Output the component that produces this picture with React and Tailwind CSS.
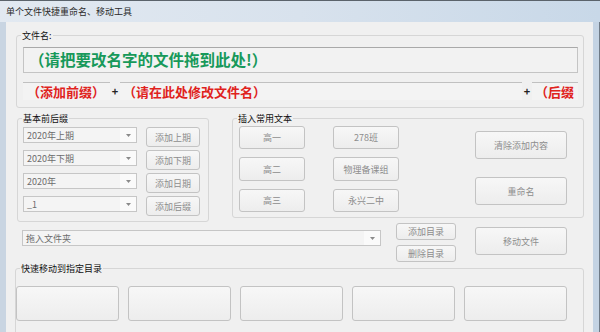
import React from "react";

const font = { fontFamily: '"Noto Sans CJK SC", "Noto Sans", sans-serif' };

function Btn({ className = "", children }) {
  return (
    <div
      className={
        "flex items-center justify-center rounded-[3px] border border-[#c3c3c3] bg-gradient-to-b from-[#f7f7f7] to-[#ededed] text-[9px] leading-none text-[#8d8d8d] " +
        className
      }
    >
      {children}
    </div>
  );
}

function Combo({ className = "", children }) {
  return (
    <div className={"flex items-stretch border border-[#c6c6c6] bg-[#f4f4f4] " + className}>
      <div className="flex flex-1 items-center pl-[3px] text-[9px] leading-none text-[#6c6c6c]">{children}</div>
      <div className="flex w-[16px] items-center justify-center bg-[#fafafa]">
        <svg width="5" height="3" viewBox="0 0 5 3">
          <path d="M0 0h5L2.5 3z" fill="#8a8a8a" />
        </svg>
      </div>
    </div>
  );
}

function Group({ label, className = "", children }) {
  return (
    <div className={"relative rounded-[3px] border border-[#d6d6d6] " + className}>
      <div className="absolute -top-[6px] left-[4px] bg-[#f0f0f0] px-[1px] text-[9px] leading-[11px] text-[#111]">
        {label}
      </div>
      {children}
    </div>
  );
}

export default function App() {
  return (
    <div className="flex h-[332px] w-[600px] flex-col overflow-hidden bg-[#c8d6e4]" style={font}>
      {/* title bar */}
      <div className="flex h-[22px] shrink-0 items-center border-t border-[#5b636b] bg-gradient-to-r from-[#e2e9f1] via-[#d8e2ed] to-[#c8d8e8] pl-[6px] text-[9px] text-[#2a2a2a]">
        单个文件快捷重命名、移动工具
      </div>
      <div className="flex flex-1">
        <div className="w-[6px] shrink-0 bg-[#c9d5e2]" />
        <div className="flex w-[587px] flex-col bg-[#f0f0f0]">
          {/* group 1 */}
          <Group label="文件名:" className="ml-[10px] mt-[13px] h-[73px] w-[568px] shrink-0">
            <div className="flex flex-col pl-[6px] pt-[11px]">
              <div className="flex h-[26px] w-[555px] items-center border border-[#c4c4c4] border-t-[#a9a9a9] bg-[#f2f2f2] pl-[5px] text-[15.5px] font-bold leading-none text-[#17995a]">
                （请把要改名字的文件拖到此处!）
              </div>
              <div className="mt-[9px] flex h-[18px] items-stretch text-[13px] font-bold leading-none text-[#e0221c]">
                <div className="flex w-[87px] items-center border-t border-[#c0c0c0] bg-[#f3f3f3] pl-[4px]">（添加前缀）</div>
                <div className="flex w-[10px] items-center justify-center text-[11px] font-bold text-[#222]">+</div>
                <div className="flex w-[402px] items-center border-t border-[#c0c0c0] bg-[#f3f3f3] pl-[3px]">（请在此处修改文件名）</div>
                <div className="flex w-[10px] items-center justify-center text-[11px] font-bold text-[#222]">+</div>
                <div className="flex w-[46px] items-center whitespace-nowrap border-t border-[#c0c0c0] bg-[#f3f3f3] pl-[3px]">（后缀</div>
              </div>
            </div>
          </Group>

          {/* groups 2 and 3 */}
          <div className="mt-[10px] flex h-[104px] shrink-0 items-start">
            <Group label="基本前后缀" className="ml-[11px] h-[104px] w-[192px]">
              <div className="grid grid-cols-[114px_54px] gap-x-[9px] pl-[5px] pt-[8px]">
                {[
                  ["2020年上期", "添加上期"],
                  ["2020年下期", "添加下期"],
                  ["2020年", "添加日期"],
                  ["_1", "添加后缀"],
                ].map(([c, b]) => (
                  <React.Fragment key={b}>
                    <div className="h-[23px]">
                      <Combo className="h-[16px]">{c}</Combo>
                    </div>
                    <div className="h-[23px]">
                      <Btn className="h-[20px]">{b}</Btn>
                    </div>
                  </React.Fragment>
                ))}
              </div>
            </Group>
            <Group label="插入常用文本" className="ml-[23px] h-[100px] w-[352px]">
              <div className="flex pl-[6px] pt-[7px]">
                <div className="grid grid-cols-[66px_66px] gap-x-[28px] gap-y-[8px]">
                  <Btn className="h-[23px]">高一</Btn>
                  <Btn className="h-[23px]">278班</Btn>
                  <Btn className="h-[24px]">高二</Btn>
                  <Btn className="h-[24px]">物理备课组</Btn>
                  <Btn className="h-[23px]">高三</Btn>
                  <Btn className="h-[23px]">永兴二中</Btn>
                </div>
                <div className="ml-[76px] flex flex-col gap-[18px] pt-[5px]">
                  <Btn className="h-[28px] w-[92px]">清除添加内容</Btn>
                  <Btn className="h-[28px] w-[92px]">重命名</Btn>
                </div>
              </div>
            </Group>
          </div>

          {/* folder row */}
          <div className="flex h-[40px] shrink-0 items-start">
            <Combo className="ml-[16px] mt-[8px] h-[16px] w-[359px]">拖入文件夹</Combo>
            <div className="ml-[15px] mt-[1px] flex flex-col gap-[5px]">
              <Btn className="h-[17px] w-[60px]">添加目录</Btn>
              <Btn className="h-[17px] w-[60px]">删除目录</Btn>
            </div>
            <Btn className="ml-[19px] mt-[5px] h-[28px] w-[92px]">移动文件</Btn>
          </div>

          {/* group 4 */}
          <Group label="快速移动到指定目录" className="ml-[9px] mt-[6px] h-[70px] w-[569px] shrink-0">
            <div className="flex gap-[9px] pt-[17px]">
              {[0, 1, 2, 3, 4].map((i) => (
                <Btn key={i} className="h-[35px] w-[103px]" />
              ))}
            </div>
          </Group>
        </div>
        <div className="w-[7px] shrink-0 border-r border-[#6f7a86] bg-[#c4d3e3]" />
      </div>
    </div>
  );
}
